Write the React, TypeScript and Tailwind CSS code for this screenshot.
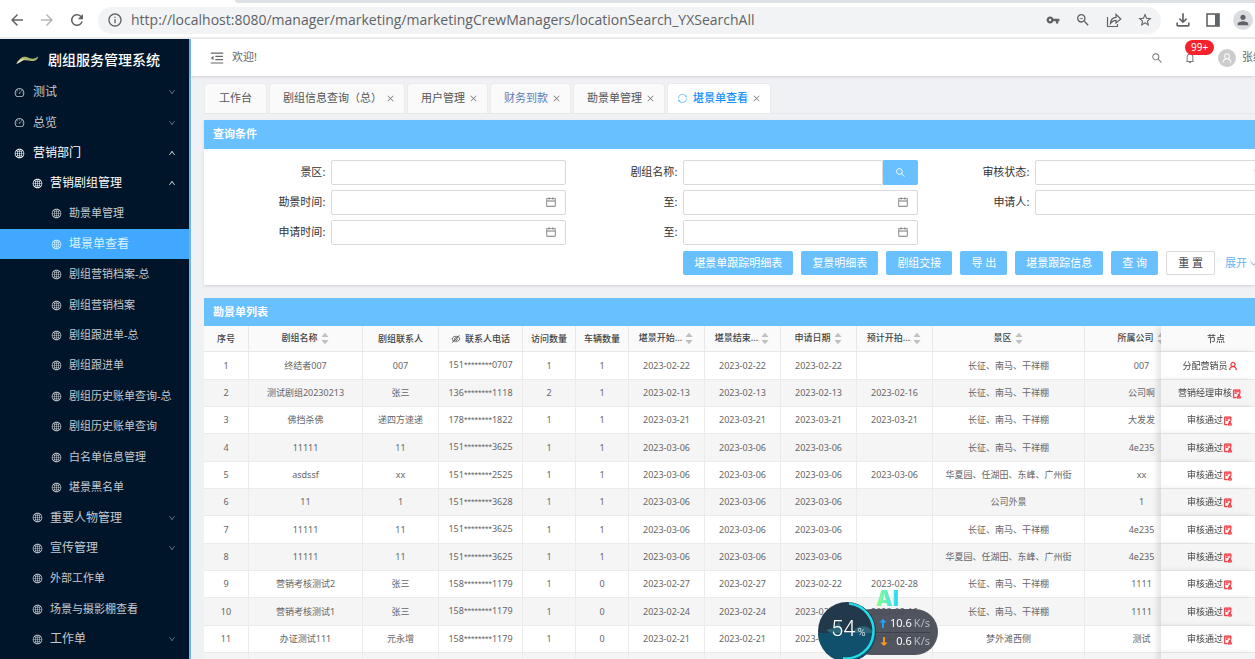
import React from 'react'
import {
  AiOutlineAudit,
  AiOutlineBell,
  AiOutlineCalendar,
  AiOutlineClose,
  AiOutlineDashboard,
  AiOutlineDown,
  AiOutlineEyeInvisible,
  AiOutlineGlobal,
  AiOutlineMenuFold,
  AiOutlineSearch,
  AiOutlineSync,
  AiOutlineUp,
  AiOutlineUser,
  AiFillCaretDown,
  AiFillCaretUp,
} from 'react-icons/ai'
import {
  MdArrowBack,
  MdArrowForward,
  MdInfoOutline,
  MdOutlineFileDownload,
  MdPerson,
  MdRefresh,
  MdStarBorder,
  MdVpnKey,
  MdZoomOut,
} from 'react-icons/md'
import clsx from 'clsx'

type MenuItem = {
  label: string
  level: 1 | 2 | 3
  icon?: 'dashboard'
  open?: boolean
  large?: boolean
  active?: boolean
}

const menu: MenuItem[] = [
  { label: '测试', level: 1, icon: 'dashboard', open: false, large: true },
  { label: '总览', level: 1, icon: 'dashboard', open: false, large: true },
  { label: '营销部门', level: 1, open: true, large: true },
  { label: '营销剧组管理', level: 2, open: true, large: true },
  { label: '勘景单管理', level: 3 },
  { label: '堪景单查看', level: 3, active: true, large: true },
  { label: '剧组营销档案-总', level: 3 },
  { label: '剧组营销档案', level: 3 },
  { label: '剧组跟进单-总', level: 3 },
  { label: '剧组跟进单', level: 3 },
  { label: '剧组历史账单查询-总', level: 3 },
  { label: '剧组历史账单查询', level: 3 },
  { label: '白名单信息管理', level: 3 },
  { label: '堪景黑名单', level: 3 },
  { label: '重要人物管理', level: 2, open: false, large: true },
  { label: '宣传管理', level: 2, open: false, large: true },
  { label: '外部工作单', level: 2 },
  { label: '场景与摄影棚查看', level: 2 },
  { label: '工作单', level: 2, open: false, large: true },
]

const tabs = [
  { label: '工作台', closable: false },
  { label: '剧组信息查询（总）', closable: true },
  { label: '用户管理', closable: true },
  { label: '财务到款', closable: true, visited: true },
  { label: '勘景单管理', closable: true },
  { label: '堪景单查看', closable: true, active: true },
]

const actions = ['堪景单跟踪明细表', '复景明细表', '剧组交接', '导 出', '堪景跟踪信息', '查 询']

const columns = [
  { label: '序号', width: 'w-[45px]' },
  { label: '剧组名称', width: 'w-[114px]', sort: true },
  { label: '剧组联系人', width: 'w-[76px]' },
  { label: '联系人电话', width: 'w-[84px]', masked: true },
  { label: '访问数量', width: 'w-[53px]' },
  { label: '车辆数量', width: 'w-[53px]' },
  { label: '堪景开始...', width: 'w-[76px]', sort: true },
  { label: '堪景结束...', width: 'w-[76px]', sort: true },
  { label: '申请日期', width: 'w-[76px]', sort: true },
  { label: '预计开拍...', width: 'w-[76px]', sort: true },
  { label: '景区', width: 'w-[152px]', sort: true },
  { label: '所属公司', width: 'w-[114px]', sort: true },
]

const PHONE_COLUMN = 3

const rows = [
  ['1', '终结者007', '007', '151********0707', '1', '1', '2023-02-22', '2023-02-22', '2023-02-22', '', '长征、南马、干祥棚', '007', '分配营销员'],
  ['2', '测试剧组20230213', '张三', '136********1118', '2', '1', '2023-02-13', '2023-02-13', '2023-02-13', '2023-02-16', '长征、南马、干祥棚', '公司啊', '营销经理审核'],
  ['3', '佛挡杀佛', '递四方速递', '178********1822', '1', '1', '2023-03-21', '2023-03-21', '2023-03-21', '2023-03-21', '长征、南马、干祥棚', '大发发', '审核通过'],
  ['4', '11111', '11', '151********3625', '1', '1', '2023-03-06', '2023-03-06', '2023-03-06', '', '长征、南马、干祥棚', '4e235', '审核通过'],
  ['5', 'asdssf', 'xx', '151********2525', '1', '1', '2023-03-06', '2023-03-06', '2023-03-06', '2023-03-06', '华夏园、任湖田、东峰、广州街', 'xx', '审核通过'],
  ['6', '11', '1', '151********3628', '1', '1', '2023-03-06', '2023-03-06', '2023-03-06', '', '公司外景', '1', '审核通过'],
  ['7', '11111', '11', '151********3625', '1', '1', '2023-03-06', '2023-03-06', '2023-03-06', '', '长征、南马、干祥棚', '4e235', '审核通过'],
  ['8', '11111', '11', '151********3625', '1', '1', '2023-03-06', '2023-03-06', '2023-03-06', '', '华夏园、任湖田、东峰、广州街', '4e235', '审核通过'],
  ['9', '营销考核测试2', '张三', '158********1179', '1', '0', '2023-02-27', '2023-02-27', '2023-02-22', '2023-02-28', '长征、南马、干祥棚', '1111', '审核通过'],
  ['10', '营销考核测试1', '张三', '158********1179', '1', '0', '2023-02-24', '2023-02-24', '2023-02-24', '2023-02-16', '长征、南马、干祥棚', '1111', '审核通过'],
  ['11', '办证测试111', '元永增', '158********1179', '1', '0', '2023-02-21', '2023-02-21', '2023-02-21', '2023-02-21', '梦外滩西侧', '测试', '审核通过'],
  ['', '', '', '', '', '', '', '', '', '', '', '', ''],
]

const BrowserBar: React.FC = () => (
  <div className="shrink-0 border-b-2 border-[#ebecee] bg-white">
    <div className="h-[3px] pl-[235px]">
      <div className="h-full rounded-bl bg-[#dfe1e8]" />
    </div>
    <div className="flex h-[34px] items-center text-[#5f6368]">
      <div className="flex shrink-0 items-center gap-3 pl-2 text-[18px]">
        <button aria-label="后退"><MdArrowBack /></button>
        <button aria-label="前进" className="text-[#b4b6b9]"><MdArrowForward /></button>
        <button aria-label="刷新"><MdRefresh /></button>
      </div>
      <div className="ml-3 flex h-[27px] min-w-0 flex-1 items-center rounded-full bg-[#f1f3f4] pr-2 pl-[9px]">
        <MdInfoOutline className="size-4 shrink-0" />
        <input
          aria-label="地址"
          readOnly
          value="http://localhost:8080/manager/marketing/marketingCrewManagers/locationSearch_YXSearchAll"
          className="ml-2 min-w-0 flex-1 bg-transparent font-['Open_Sans'] text-sm text-[#5f6368] outline-none"
        />
        <div className="flex shrink-0 items-center gap-[15px]">
          <button aria-label="密码"><MdVpnKey className="size-[14px]" /></button>
          <button aria-label="缩放"><MdZoomOut className="size-4" /></button>
          <button aria-label="分享">
            <svg viewBox="0 0 16 16" className="size-4 fill-none stroke-current" strokeWidth="1.2">
              <path d="M1.5 5v9.500h10V12" />
              <path d="M4.500 11.500C4.800 7.500 7 5.500 10 5.400V2.500L14.800 7 10 11V8.300C7.600 8.300 6 9.400 4.500 11.500Z" />
            </svg>
          </button>
          <button aria-label="收藏"><MdStarBorder className="size-4" /></button>
        </div>
      </div>
      <div className="flex shrink-0 items-center gap-[13px] pr-[2px] pl-[12px]">
        <button aria-label="下载"><MdOutlineFileDownload className="size-5" /></button>
        <button aria-label="侧边栏">
          <svg viewBox="0 0 14 14" className="size-[14px]">
            <rect x="1" y="1" width="12" height="12" fill="none" stroke="currentColor" strokeWidth="1.600" />
            <rect x="9" y="1" width="4" height="12" fill="currentColor" />
          </svg>
        </button>
        <button aria-label="个人资料" className="flex size-5 items-center justify-center rounded-full bg-[#dadce0]">
          <MdPerson className="size-4" />
        </button>
      </div>
    </div>
  </div>
)

const Sidebar: React.FC = () => (
  <aside className="w-[191px] shrink-0 overflow-hidden border-r-2 border-[#6db5f2] bg-[#001529] text-white">
    <div className="flex h-[38px] items-center gap-[10px] pt-1 pl-4">
      <svg viewBox="0 0 22 10" className="h-[10px] w-[22px]">
        <path d="M1 7.500C4 2.500 7 1 10.500 2c4 1.500 7 3 11.500-.500 0 3-3 5-6.500 4.500C10.500 5 6 4.500 1 7.500Z" fill="#a9b86a" />
        <path d="M0 9c2.500-4 5-5.500 9-5C6.500 5.500 4 8 0 9Z" fill="#e8d9b8" />
      </svg>
      <h1 className="text-sm font-medium">剧组服务管理系统</h1>
    </div>
    <nav>
      {menu.map((item) => (
        <a
          key={item.label}
          href="#"
          className={clsx(
            'flex h-[30px] items-center pr-[13px] nth-[5n]:h-[31px] nth-[5n+2]:h-[31px]',
            item.level === 1 && 'gap-2 pl-[14px]',
            item.level === 2 && 'gap-[7px] pl-8',
            item.level === 3 && 'gap-[7px] pl-[51px]',
            item.large ? 'text-xs' : 'text-[11px]',
            item.active ? 'bg-[#40a9ff] text-[#d8f3ff]' : item.open ? 'text-white' : 'text-[#c3c9d0]',
          )}
        >
          {item.icon === 'dashboard' ? (
            <AiOutlineDashboard className="size-[11px] shrink-0" />
          ) : (
            <AiOutlineGlobal className="size-[11px] shrink-0" />
          )}
          <span className="flex-1 whitespace-nowrap">{item.label}</span>
          {item.open === true && <AiOutlineUp className="size-2" />}
          {item.open === false && <AiOutlineDown className="size-2 opacity-60" />}
        </a>
      ))}
    </nav>
  </aside>
)

const TopHeader: React.FC = () => (
  <header className="relative flex h-[37px] shrink-0 items-center bg-white pl-[18px] text-[#666] shadow">
    <button aria-label="收起菜单"><AiOutlineMenuFold className="size-4" /></button>
    <span className="ml-[7px] flex-1 text-[11px]">欢迎!</span>
    <button aria-label="搜索"><AiOutlineSearch className="size-3" /></button>
    <button aria-label="通知" className="relative ml-[21px]">
      <AiOutlineBell className="size-3" />
      <span className="absolute -top-[12px] left-[1px] rounded-full bg-[#f5222d] px-[6px] text-[10px] leading-[15px] text-white">99+</span>
    </button>
    <button className="ml-[22px] flex w-[37px] items-center gap-[6px] overflow-hidden">
      <span className="flex size-[18px] shrink-0 items-center justify-center rounded-full bg-[#ccc] text-white">
        <AiOutlineUser className="size-3" />
      </span>
      <span className="text-[11px] whitespace-nowrap">张维</span>
    </button>
  </header>
)

const TabBar: React.FC = () => (
  <div role="tablist" className="flex gap-[2px] border-b border-[#e8e8e8]">
    {tabs.map((tab) => (
      <div
        key={tab.label}
        className={clsx(
          'flex h-[30px] items-center gap-1 rounded-t-sm border border-b-0 border-[#ebebee]',
          tab.active ? 'bg-white px-[9px]' : 'bg-[#fafafa]',
          !tab.active && (tab.closable ? 'pr-[9px] pl-[13px]' : 'px-[14px]'),
        )}
      >
        {tab.active && <AiOutlineSync className="mr-[1px] size-[11px] text-[#69c0ff]" />}
        <button
          role="tab"
          aria-selected={!!tab.active}
          className={clsx(
            'text-[11px] whitespace-nowrap',
            tab.active ? 'font-medium text-[#1890ff]' : tab.visited ? 'text-[#5b80b5]' : 'text-[#555]',
          )}
        >
          {tab.label}
        </button>
        {tab.closable && (
          <button aria-label={`关闭${tab.label}`}><AiOutlineClose className="size-[9px] text-[#777]" /></button>
        )}
      </div>
    ))}
  </div>
)

type FieldProps = { id: string; label: string; kind?: 'text' | 'date' | 'search' | 'select' }

const Field: React.FC<FieldProps> = ({ id, label, kind = 'text' }) => {
  const box = 'h-full w-full rounded-xs border border-[#d9d9d9] bg-white px-2 text-[11px] outline-none'
  return (
    <div className="flex h-[25px] items-center">
      <label htmlFor={id} className="w-1/3 pr-[6px] text-right text-[11px] text-[#333]">
        {label}:
      </label>
      <div className="relative flex h-full w-2/3">
        {kind === 'select' ? (
          <select id={id} className={clsx(box, 'appearance-none')} />
        ) : (
          <input id={id} type="text" className={box} />
        )}
        {kind === 'search' && (
          <button aria-label="搜索剧组" className="flex w-[35px] shrink-0 items-center justify-center rounded-r-xs bg-[#69c0ff] text-white">
            <AiOutlineSearch className="size-[11px]" />
          </button>
        )}
        {kind === 'date' && <AiOutlineCalendar className="absolute top-[6px] right-[9px] size-3 text-[#777]" />}
        {kind === 'select' && <AiOutlineDown className="absolute top-2 right-[9px] size-2 text-[#aaa]" />}
      </div>
    </div>
  )
}

const SearchPanel: React.FC = () => (
  <section className="mt-[6px] overflow-hidden bg-white shadow-sm">
    <h2 className="flex h-[29px] items-center bg-[#69c0ff] pl-[9px] text-[11px] font-bold text-white">查询条件</h2>
    <form className="-mr-[15px] pt-[11px] pb-[10px] pl-[10px]" onSubmit={(e) => e.preventDefault()}>
      <div className="grid grid-cols-3 gap-y-[5px]">
        <Field id="area" label="景区" />
        <Field id="crew" label="剧组名称" kind="search" />
        <Field id="status" label="审核状态" kind="select" />
        <Field id="survey-from" label="勘景时间" kind="date" />
        <Field id="survey-to" label="至" kind="date" />
        <Field id="applicant" label="申请人" />
        <Field id="apply-from" label="申请时间" kind="date" />
        <Field id="apply-to" label="至" kind="date" />
      </div>
      <div className="mt-[6px] flex justify-end gap-2 pr-[12px] text-[11px] whitespace-nowrap">
        {actions.map((label) => (
          <button key={label} type="button" className="h-6 rounded-xs bg-[#69c0ff] px-[11px] text-white">
            {label}
          </button>
        ))}
        <button type="reset" className="h-6 rounded-xs border border-[#d9d9d9] px-[11px] text-[#444]">重 置</button>
        <a href="#" className="ml-[2px] flex items-center gap-[2px] text-[#69b4f0]">
          展开 <AiOutlineDown className="size-[9px]" />
        </a>
      </div>
    </form>
  </section>
)

const SortArrows: React.FC = () => (
  <span className="ml-[2px] inline-flex flex-col align-middle text-[#bfbfbf]">
    <AiFillCaretUp className="-mb-[3px] size-[10px]" />
    <AiFillCaretDown className="size-[10px]" />
  </span>
)

const Phone: React.FC<{ value: string }> = ({ value }) => (
  <>
    {value.slice(0, 3)}
    <span className="font-['Liberation_Sans']">{value.slice(3, 11)}</span>
    {value.slice(11)}
  </>
)

const ResultTable: React.FC = () => (
  <section className="mt-[13px] bg-white">
    <h2 className="flex h-7 items-center bg-[#69c0ff] pl-[9px] text-[11px] font-bold text-white">勘景单列表</h2>
    <div className="overflow-x-auto">
      <table className="w-full min-w-[1089px] table-fixed border-separate border-spacing-0 text-center text-[9px] whitespace-nowrap text-[#666]">
        <thead>
          <tr className="h-[26px] bg-[#fafafa] text-[#444]">
            {columns.map((col) => (
              <th key={col.label} className={clsx('border-r border-b border-[#e8e8e8] p-0 font-medium', col.width)}>
                {col.masked && <AiOutlineEyeInvisible className="mr-1 inline size-[10px]" />}
                {col.label}
                {col.sort && <SortArrows />}
              </th>
            ))}
            <th className="sticky right-0 w-[94px] border-b border-[#e8e8e8] bg-[#fafafa] p-0 pl-4 font-medium shadow-[-4px_0_6px_rgba(0,0,0,0.1)]">
              节点
            </th>
          </tr>
        </thead>
        <tbody>
          {rows.map((row, i) => {
            const last = row.length - 1
            return (
              <tr key={i} className="h-[27px] bg-white nth-[3n+1]:h-[28px] even:bg-[#f5f5f6]">
                {row.slice(0, last).map((cell, j) => (
                  <td key={j} className="border-r border-b border-[#ebebeb] p-0">
                    {j === PHONE_COLUMN ? <Phone value={cell} /> : cell}
                  </td>
                ))}
                <td className="sticky right-0 border-b border-[#ebebeb] bg-inherit p-0 pl-1 text-[#444] shadow-[-4px_0_6px_rgba(0,0,0,0.1)]">
                  {row[last]}
                  {row[last] &&
                    (i === 0 ? (
                      <AiOutlineUser strokeWidth={40} className="inline size-[10px] text-[#f5222d]" />
                    ) : (
                      <AiOutlineAudit strokeWidth={40} className="inline size-[10px] text-[#f5222d]" />
                    ))}
                </td>
              </tr>
            )
          })}
        </tbody>
      </table>
    </div>
  </section>
)

// Floating system monitor, sits over the page
const SpeedWidget: React.FC = () => (
  <div className="absolute right-[317px] -bottom-[2px] h-[70px] w-[121px]">
    <div className="absolute right-0 bottom-[6px] flex h-[46px] w-[90px] flex-col justify-center rounded-full bg-[#484c57]/95 pr-2 text-[11px] text-white">
      <p className="flex h-[17px] items-center justify-end gap-[2px]">
        <svg viewBox="0 0 8 10" className="mr-[1px] h-[9px] w-2 fill-[#1ea7fd]"><path d="M4 0 8 4H5v6H3V4H0Z" /></svg>
        10.6<span className="text-[#b7bac1]">K/s</span>
      </p>
      <p className="flex h-[17px] items-center justify-end gap-[2px] border-t border-[#3d414b]">
        <svg viewBox="0 0 8 10" className="mr-[6px] h-[9px] w-2 fill-[#ff9a1e]"><path d="M4 10 8 6H5V0H3v6H0Z" /></svg>
        0.6<span className="text-[#b7bac1]">K/s</span>
      </p>
    </div>
    <span className="absolute -top-[2px] left-[59px] bg-linear-to-r from-[#8dff7a] to-[#10d8ff] bg-clip-text font-['Inter'] text-[21px] leading-5 font-black text-transparent">AI</span>
    <svg viewBox="0 0 60 60" className="absolute bottom-0 left-0 size-[60px]">
      <circle cx="30" cy="30" r="29" fill="#22384b" />
      <path d="M9 29c5-2 8-1 9-3 1-3 3-4 4-6 1 3 1 6 3 8 2 2-1 4-4 5-4 0-8-1-12-4Z" fill="#2c6678" />
      <path d="M36 31c3-6 14-9 20 0v3H36Z" fill="#2c6678" />
      <path d="M1 32h58A29 29 0 0 1 1 32Z" fill="#11506c" />
      <path d="M32 2.500A27.500 27.500 0 0 1 26 57.300" fill="none" stroke="#22dbe6" strokeWidth="2.500" />
    </svg>
    <p className="absolute bottom-[14px] left-[14px] flex items-baseline gap-[2px] font-['Roboto',sans-serif] text-[22px] leading-7 font-light text-white">
      54<span className="text-[11px]">%</span>
    </p>
  </div>
)

export default function App() {
  return (
    <div className="relative flex h-screen flex-col overflow-hidden bg-[#f0f1f5] font-['Noto_Sans','Noto_Sans_CJK_SC',sans-serif]">
      <BrowserBar />
      <div className="flex min-h-0 flex-1">
        <Sidebar />
        <div className="flex min-w-0 flex-1 flex-col">
          <TopHeader />
          <main className="min-h-0 flex-1 overflow-hidden pt-[7px] pl-[13px]">
            <TabBar />
            <SearchPanel />
            <ResultTable />
          </main>
        </div>
      </div>
      <SpeedWidget />
    </div>
  )
}
